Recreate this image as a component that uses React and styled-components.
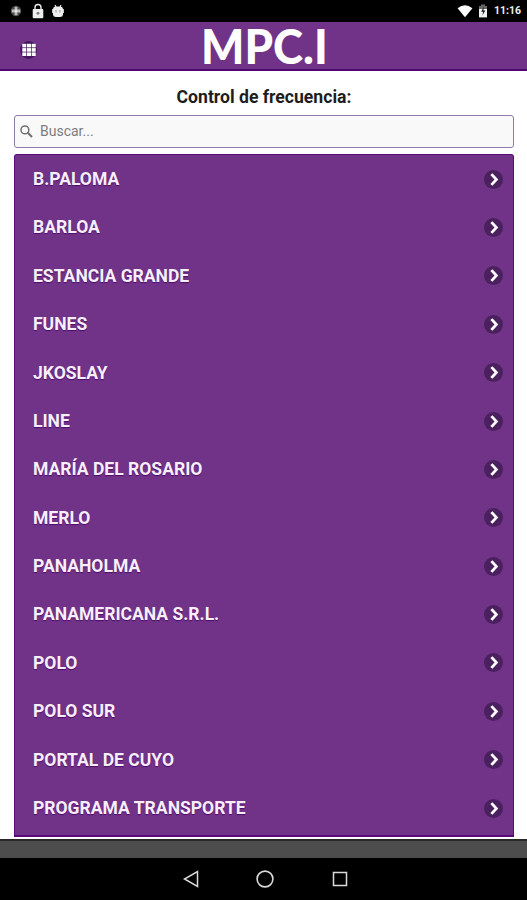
import React from 'react';
import styled, { createGlobalStyle } from 'styled-components';

const GlobalStyle = createGlobalStyle`
  * { box-sizing: border-box; }
  body { margin: 0; background: #fff; font-family: Roboto, "Liberation Sans", sans-serif; }
`;

const Screen = styled.div`
  display: flex;
  flex-direction: column;
  width: 527px;
  height: 900px;
  overflow: hidden;
  background: #fff;
`;

const StatusBar = styled.div`
  flex: none;
  display: flex;
  justify-content: space-between;
  height: 22px;
  padding: 0 6px 0 9px;
  background: #000;
`;

const StatusGroup = styled.div`
  display: flex;
  align-items: center;
  gap: ${(p) => p.$gap}px;
`;

const Clock = styled.span`
  width: 28px;
  color: #ededed;
  font-size: 10.5px;
  font-weight: 700;
  line-height: 22px;
  text-align: right;
  white-space: nowrap;
`;

const Header = styled.header`
  flex: none;
  display: grid;
  grid-template-columns: 201px 1fr;
  align-items: center;
  height: 49px;
  background: #703388;
  border-bottom: 2px solid #510873;
`;

const MenuButton = styled.button`
  display: flex;
  align-items: center;
  justify-content: center;
  width: 17px;
  height: 18px;
  margin: 9px 0 0 20px;
  padding: 0;
  border: 0;
  border-radius: 50%;
  background: #46155f;
`;

const Logo = styled.div`
  height: 47px;
  color: #fff;
  font-family: Lato, "Open Sans", sans-serif;
  font-size: 48px;
  font-weight: 900;
  line-height: 47px;
  white-space: nowrap;
  transform: scaleX(${(p) => p.$stretch});
  transform-origin: 0 50%;
`;

const Content = styled.main`
  flex: none;
  display: flex;
  flex-direction: column;
  height: 768px;
  padding: 0 13px 0 14px;
`;

const Title = styled.h1`
  flex: none;
  height: 44px;
  margin: 0;
  padding-top: 16px;
  color: #1d1d1d;
  font-size: 17.6px;
  font-weight: 700;
  line-height: 21px;
  text-align: center;
`;

const SearchField = styled.label`
  flex: none;
  display: flex;
  align-items: center;
  gap: 7px;
  height: 33px;
  padding-left: 5px;
  border: 1px solid #8d7ba6;
  border-radius: 3px;
  background: #f9f9f9;
`;

const SearchInput = styled.input`
  flex: 1;
  height: 29px;
  padding: 0 0 1px;
  border: 0;
  outline: 0;
  background: transparent;
  color: #333;
  font: 400 14px Roboto, "Liberation Sans", sans-serif;
  &::placeholder { color: #7c7c7c; opacity: 1; }
`;

const List = styled.ul`
  flex: none;
  height: 683px;
  margin: 6px 0 0;
  padding: 0;
  overflow: hidden;
  list-style: none;
  background: #703388;
  border: 1px solid #570b76;
  border-bottom-width: 2px;
  border-radius: 3px 3px 0 0;
`;

const Row = styled.li`
  display: flex;
  align-items: center;
  justify-content: space-between;
  height: 48.38px;
  padding: 0 10px 0 18px;
`;

const RowLabel = styled.span`
  padding-bottom: 0.3px;
  color: #f8effb;
  font-size: 17.55px;
  font-weight: 700;
  line-height: 22px;
  text-shadow: 0 1px 1px #4d0a6b;
`;

const RowArrow = styled.span`
  display: flex;
  align-items: center;
  justify-content: center;
  width: 19px;
  height: 19px;
  border-radius: 50%;
  background: #4b205f;
`;

const Footer = styled.div`
  flex: none;
  height: 19px;
  background: #4d4d4d;
  border-top: 2px solid #292929;
`;

const NavBar = styled.nav`
  flex: 1;
  display: flex;
  align-items: center;
  justify-content: center;
  gap: 55px;
  padding-left: 4px;
  background: #000;
`;

const items = [
  'B.PALOMA', 'BARLOA', 'ESTANCIA GRANDE', 'FUNES', 'JKOSLAY', 'LINE',
  'MARÍA DEL ROSARIO', 'MERLO', 'PANAHOLMA', 'PANAMERICANA S.R.L.', 'POLO',
  'POLO SUR', 'PORTAL DE CUYO', 'PROGRAMA TRANSPORTE',
];

const SyncIcon = () => (
  <svg width="14" height="14" viewBox="0 0 14 14">
    <circle cx="7" cy="7" r="5.2" fill="#484848" />
    <path d="M7 2.8v8.4M2.8 7h8.4" stroke="#bdbdbd" strokeWidth="2.8" />
    <circle cx="7" cy="7" r="1.2" fill="#eee" />
  </svg>
);

const LockIcon = () => (
  <svg width="12" height="16" viewBox="0 0 12 16">
    <path d="M3 7V4.5a3 3 0 0 1 6 0V7" fill="none" stroke="#eee" strokeWidth="1.4" />
    <rect x=".7" y="6" width="10.6" height="9.2" rx="1" fill="#eee" />
    <circle cx="6" cy="10.3" r="1.4" fill="#777" />
  </svg>
);

const DroidIcon = () => (
  <svg width="12" height="14" viewBox="0 0 12 14">
    <path d="M3 1l1 2M9 1L8 3" stroke="#eee" strokeWidth="1.2" />
    <rect x="1" y="2.5" width="10" height="10.5" rx="3" fill="#eee" />
    <path d="M.4 5v4M11.6 5v4" stroke="#ddd" />
    <path d="M4 6v2.5M8 6v2.5" stroke="#999" />
  </svg>
);

const WifiIcon = () => (
  <svg width="16" height="14" viewBox="0 0 16 14">
    <path d="M.6 4.2Q8-1.6 15.4 4.2L8 13.3z" fill="#fff" />
  </svg>
);

const BatteryIcon = () => (
  <svg width="10" height="14" viewBox="0 0 10 14">
    <path d="M3 .6h4v1.5h2V6H1V2.1h2z" fill="#666" />
    <path d="M1 5h8v8.4H1z" fill="#f2f2f2" />
    <path d="M6 2.5L3.2 7.7h2L4.4 11.5 7.3 6.5h-2z" fill="#111" />
  </svg>
);

const GridIcon = () => (
  <svg width="14" height="14" viewBox="0 0 14 14">
    {[0, 1, 2].map((r) => [0, 1, 2].map((c) => (
      <rect key={`${r}${c}`} x={0.3 + c * 4.7} y={0.8 + r * 4.3} width="4" height="3.6" fill="#fff" />
    )))}
  </svg>
);

const SearchIcon = () => (
  <svg width="13" height="13" viewBox="0 0 13 13" fill="none" stroke="#707070">
    <circle cx="4.9" cy="4.9" r="3.9" strokeWidth="1.5" />
    <path d="M7.8 7.8l4.2 4.2" strokeWidth="2" />
  </svg>
);

const ChevronIcon = () => (
  <svg width="19" height="19" viewBox="0 0 19 19" fill="none" stroke="#fff" strokeWidth="2.8">
    <path d="M7.4 4.1l5 5.4-5 5.4" />
  </svg>
);

const BackIcon = () => (
  <svg width="19" height="20" viewBox="0 0 19 20" fill="none" stroke="#d9d9d9" strokeWidth="1.5">
    <path d="M16.5 2.5v15L3.5 10z" />
  </svg>
);

const HomeIcon = () => (
  <svg width="20" height="20" viewBox="0 0 20 20" fill="none" stroke="#d9d9d9" strokeWidth="1.6">
    <circle cx="10" cy="10" r="7.9" />
  </svg>
);

const RecentIcon = () => (
  <svg width="20" height="20" viewBox="0 0 20 20" fill="none" stroke="#d9d9d9" strokeWidth="1.5">
    <rect x="3.5" y="3.5" width="13" height="13" />
  </svg>
);

export default function App() {
  return (
    <Screen>
      <GlobalStyle />
      <StatusBar>
        <StatusGroup $gap={8.5}>
          <SyncIcon />
          <LockIcon />
          <DroidIcon />
        </StatusGroup>
        <StatusGroup $gap={5}>
          <WifiIcon />
          <BatteryIcon />
          <Clock>11:16</Clock>
        </StatusGroup>
      </StatusBar>
      <Header>
        <MenuButton aria-label="Menú"><GridIcon /></MenuButton>
        <Logo $stretch={0.95}>MPC.I</Logo>
      </Header>
      <Content>
        <Title>Control de frecuencia:</Title>
        <SearchField>
          <SearchIcon />
          <SearchInput placeholder="Buscar..." />
        </SearchField>
        <List>
          {items.map((name) => (
            <Row key={name}>
              <RowLabel>{name}</RowLabel>
              <RowArrow><ChevronIcon /></RowArrow>
            </Row>
          ))}
        </List>
      </Content>
      <Footer />
      <NavBar>
        <BackIcon />
        <HomeIcon />
        <RecentIcon />
      </NavBar>
    </Screen>
  );
}
